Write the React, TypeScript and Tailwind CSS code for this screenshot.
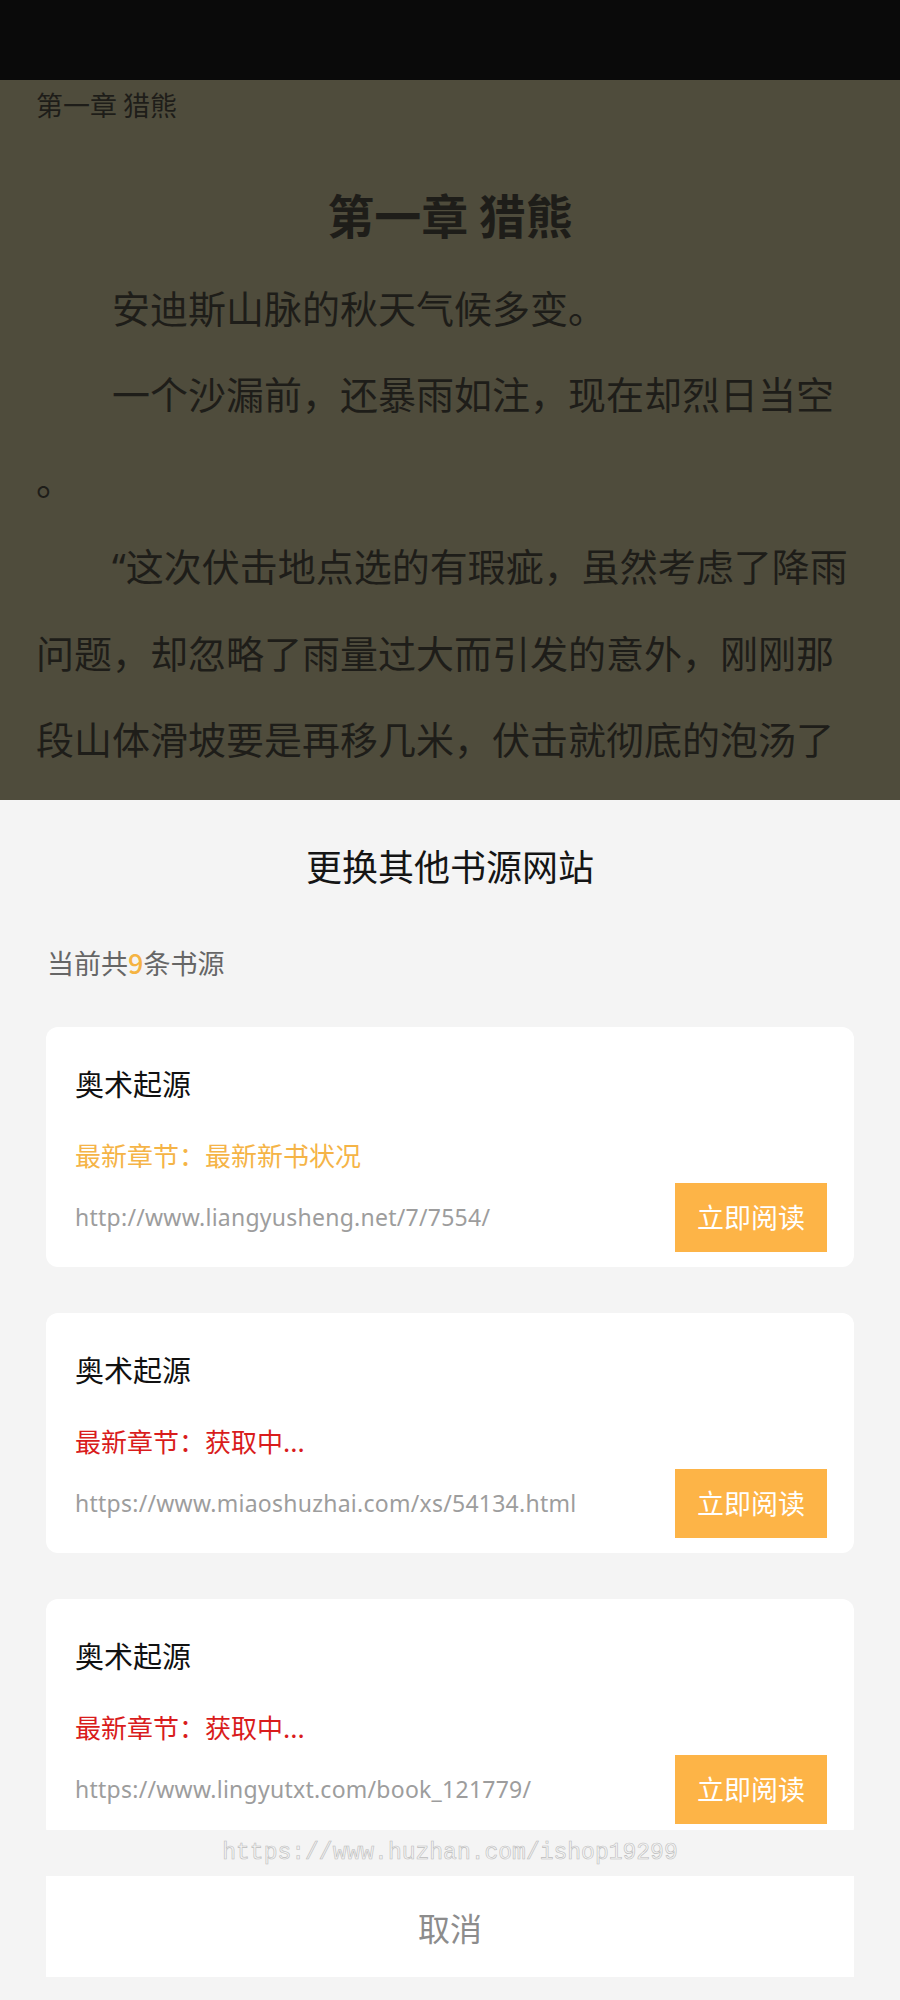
import { useState } from "react";

interface Source {
  name: string;
  latest: string;
  url: string;
  loaded: boolean;
}

const sources: Source[] = [
  { name: "奥术起源", latest: "最新新书状况", url: "http://www.liangyusheng.net/7/7554/", loaded: true },
  { name: "奥术起源", latest: "获取中...", url: "https://www.miaoshuzhai.com/xs/54134.html", loaded: false },
  { name: "奥术起源", latest: "获取中...", url: "https://www.lingyutxt.com/book_121779/", loaded: false },
];

const paragraphs = [
  "安迪斯山脉的秋天气候多变。",
  "一个沙漏前，还暴雨如注，现在却烈日当空。",
  "这次伏击地点选的有瑕疵，虽然考虑了降雨问题，却忽略了雨量过大而引发的意外，刚刚那段山体滑坡要是再移几米，伏击就彻底的泡汤了。”",
];

function SourceCard({ source }: { source: Source }) {
  return (
    <div className="h-[240px] shrink-0 rounded-[12px] bg-white pl-[29px] pr-[27px] pt-[38px] flex flex-col">
      <div className="text-[29px] leading-[36px] text-[#111111]">{source.name}</div>

      {/* latest chapter, orange when fetched, red while loading */}
      <div
        className={
          source.loaded
            ? "mt-[37px] text-[26px] leading-[34px] text-[#f5b447]"
            : "mt-[37px] text-[26px] leading-[34px] text-[#d91c1c]"
        }
      >
        最新章节：{source.latest}
      </div>

      <div className="mt-[11px] flex items-center justify-between">
        <span className="font-['Noto_Sans','Noto_Sans_CJK_SC',sans-serif] text-[23px] tracking-[0.25px] text-[#9d9d9d] whitespace-nowrap">
          {source.url}
        </span>
        <button className="w-[152px] h-[69px] bg-[#fdb447] text-white text-[27px] flex items-center justify-center">
          立即阅读
        </button>
      </div>
    </div>
  );
}

export default function App() {
  const [open, setOpen] = useState(true);

  return (
    <div className="w-[900px] h-[2000px] flex flex-col overflow-hidden font-['Noto_Sans_CJK_SC',sans-serif]">
      {/* status bar */}
      <div className="h-[80px] shrink-0 bg-[#0a0a0a]" />

      {/* reader page */}
      <div className="h-[720px] shrink-0 bg-[#4f4c3c] px-[36px] overflow-hidden text-[#1e1d19]">
        <div className="pt-[10px] text-[27px] leading-[30px]">第一章 猎熊</div>
        <h1 className="mt-[64px] text-center text-[47px] leading-[60px] font-bold">第一章 猎熊</h1>
        <div className="mt-[20px] w-[828px] text-[38px] leading-[86px] [line-break:anywhere] [text-spacing-trim:space-all]">
          {paragraphs.map((p, i) => (
            <p key={i} className="indent-[76px]">
              {i === 2 && <span className="font-['Noto_Sans',sans-serif]">“</span>}
              {p}
            </p>
          ))}
        </div>
      </div>

      {/* change source sheet */}
      {open && (
        <div className="flex-1 bg-[#f4f4f4] flex flex-col pt-[40px] pb-[23px]">
          <div className="text-center text-[36px] leading-[50px] text-[#151515]">更换其他书源网站</div>
          <div className="mt-[56px] px-[47px] text-[27px] leading-[34px] text-[#666666]">
            当前共<span className="font-medium text-[#f5b342]">9</span>条书源
          </div>

          <div className="h-[850px] shrink-0 overflow-hidden px-[46px]">
            <div className="pt-[47px] flex flex-col gap-[46px]">
              {sources.map((s, i) => (
                <SourceCard key={i} source={s} />
              ))}
            </div>
          </div>

          <div className="h-[46px] shrink-0 flex items-center justify-center font-['Liberation_Mono',monospace] text-[23px] text-transparent [-webkit-text-stroke:0.6px_#bcbcbc]">
            https://www.huzhan.com/ishop19299
          </div>

          <button
            onClick={() => setOpen(false)}
            className="mx-[46px] h-[101px] shrink-0 bg-white text-[32px] text-[#8c8c8c] flex items-center justify-center"
          >
            取消
          </button>
        </div>
      )}
    </div>
  );
}
